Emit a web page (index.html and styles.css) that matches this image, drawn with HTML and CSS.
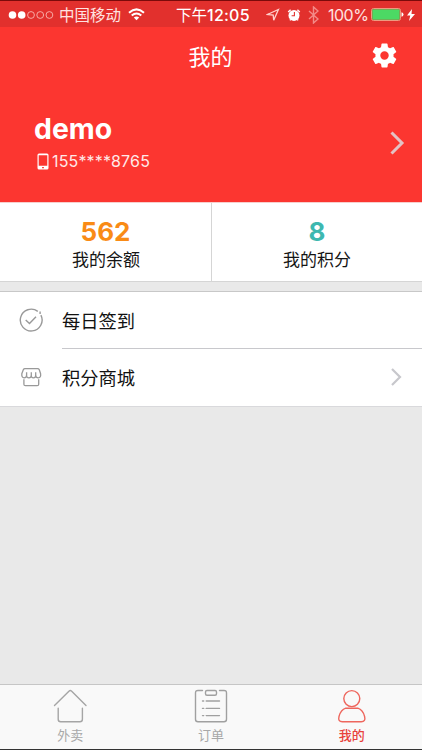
FILE: index.html
```html
<!DOCTYPE html>
<html lang="zh-CN">
<head>
<meta charset="utf-8">
<title>我的</title>
<link rel="stylesheet" href="styles.css">
</head>
<body>
<div class="app">
  <div class="status">
    <svg class="dots" width="48" height="10" viewBox="0 0 48 10" fill="none" stroke="#f9b5b1" stroke-width=".9">
      <circle cx="4.5" cy="5" r="3.8" fill="#fff" stroke="none"/><circle cx="13.7" cy="5" r="3.8" fill="#fff" stroke="none"/>
      <circle cx="23" cy="5" r="3.4"/><circle cx="32.2" cy="5" r="3.4"/><circle cx="41.4" cy="5" r="3.4"/>
    </svg>
    <span class="carrier">中国移动</span>
    <svg class="wifi" width="17" height="13" viewBox="0 0 17 13" fill="none" stroke="#fff" stroke-width="2">
      <path d="M1 4.7Q8.5-1.9 16 4.7M3.7 7.6Q8.5 3.3 13.3 7.6"/><path d="M5.8 9.5Q8.5 7.3 11.2 9.5L8.5 12.3Z" fill="#fff" stroke="none"/>
    </svg>
    <span class="time">下午<span class="digits">12:05</span></span>
    <svg class="location" width="14" height="14" viewBox="0 0 14 14" fill="none" stroke="#ffd0cd" stroke-width="1.3"><path d="M1.4 6.5 12.4 1.5 7.7 12.3 7.2 7Z"/></svg>
    <svg class="alarm" width="14" height="14" viewBox="0 0 14 14">
      <circle cx="7" cy="7.4" r="5.5" fill="#fff"/><path d="M1.2 3.9 3.6 1.7M10.4 1.7l2.4 2.2M3.6 11.4l-.6.9M10.4 11.4l.6.9" stroke="#fff" stroke-width="1.4"/><path d="M7.4 4v3.8H4.6" fill="none" stroke="#e2302d" stroke-width="1.1"/>
    </svg>
    <svg class="bluetooth" width="11" height="18" viewBox="0 0 11 18" fill="none" stroke="#f38b88" stroke-width="1.4"><path d="M1 5l9 8-4.5 4V1L10 5l-9 8"/></svg>
    <span class="percent">100%</span>
    <svg class="battery" width="33" height="13" viewBox="0 0 33 13"><rect x=".5" y=".5" width="29" height="12" rx="2" fill="none" stroke="#ed9b80"/><rect x="1.3" y="1.3" width="27.4" height="10.4" rx="1" fill="#4cd964"/><path d="M30.5 4.2q2 .3 2 2.3t-2 2.3Z" fill="#fff"/></svg>
    <svg class="bolt" width="8" height="12" viewBox="0 0 8 12" fill="#fff"><path d="M5 0 0 6.5h3.3L2 12l6-7H4.5Z"/></svg>
  </div>
  <header class="navbar">
    <h1 class="title">我的</h1>
    <svg class="gear" width="29" height="29" viewBox="0 0 24 24" fill="#fff"><path d="M19.43 12.98c.04-.32.07-.64.07-.98s-.03-.66-.07-.98l2.11-1.65c.19-.15.24-.42.12-.64l-2-3.46c-.12-.22-.39-.3-.61-.22l-2.49 1c-.52-.4-1.08-.73-1.69-.98l-.38-2.65C14.46 2.18 14.25 2 14 2h-4c-.25 0-.46.18-.49.42l-.38 2.65c-.61.25-1.17.59-1.69.98l-2.49-1c-.23-.09-.49 0-.61.22l-2 3.46c-.13.22-.07.49.12.64l2.11 1.65c-.04.32-.07.65-.07.98s.03.66.07.98l-2.11 1.65c-.19.15-.24.42-.12.64l2 3.46c.12.22.39.3.61.22l2.49-1c.52.4 1.08.73 1.69.98l.38 2.65c.03.24.24.42.49.42h4c.25 0 .46-.18.49-.42l.38-2.65c.61-.25 1.17-.59 1.69-.98l2.49 1c.23.09.49 0 .61-.22l2-3.46c.12-.22.07-.49-.12-.64zM12 15.5a3.5 3.5 0 1 1 0-7 3.5 3.5 0 0 1 0 7z"/></svg>
  </header>
  <section class="profile">
    <div class="who">
      <div class="name">demo</div>
      <div class="phone">
        <svg width="12" height="17" viewBox="0 0 12 17"><path fill="#fff" fill-rule="evenodd" d="M2 .5h8A1.5 1.5 0 0 1 11.5 2v13a1.5 1.5 0 0 1-1.5 1.5H2A1.5 1.5 0 0 1 .5 15V2A1.5 1.5 0 0 1 2 .5ZM1.7 2.2v10.6h8.6V2.2ZM5.1 14.1v1.2h1.8v-1.2Z"/></svg>
        <span>155****8765</span>
      </div>
    </div>
    <svg class="more" width="15" height="24" viewBox="0 0 15 24" fill="none" stroke="#e3c2c4" stroke-width="3"><path d="M1.5 1.5 12 12 1.5 22.5"/></svg>
  </section>
  <section class="stats">
    <div class="stat"><b class="value orange">562</b><span class="label">我的余额</span></div>
    <div class="stat"><b class="value teal">8</b><span class="label">我的积分</span></div>
  </section>
  <section class="list">
    <div class="row">
      <svg class="row-icon" width="24" height="24" viewBox="0 0 24 24" fill="none" stroke="#999" stroke-width="1.4"><path d="M21.9 7.1A10.9 10.9 0 1 1 18.8 3.4M21.1 3.6v2.3M6.7 12l3.8 3.5 6.5-6.8"/></svg>
      <div class="row-body divided"><span>每日签到</span></div>
    </div>
    <div class="row">
      <svg class="row-icon" width="24" height="24" viewBox="0 0 24 24" fill="none" stroke="#999" stroke-width="1.3" stroke-linejoin="round"><path d="M6 3.6h12.6q1.2 0 1.7 1.1l1.3 4.1q.5 4-2.3 4-2.5 0-2.6-2.6 0 2.6-2.3 2.6T12.3 10.2q0 2.6-2.4 2.6T7.6 10.2q-.1 2.6-2.5 2.6-2.6 0-2.3-4l1.5-4.1q.5-1.1 1.7-1.1ZM7.6 10.2V7.3M12.3 10.2V7.3M16.7 10.2V7.3M4.9 14.2v5q0 1.5 1.5 1.5h11.8q1.5 0 1.5-1.5v-5"/></svg>
      <div class="row-body"><span>积分商城</span>
        <svg class="chevron" width="11" height="18" viewBox="0 0 11 18" fill="none" stroke="#c7c7cc" stroke-width="2.2"><path d="m1 1 8 8-8 8"/></svg>
      </div>
    </div>
  </section>
  <main class="blank"></main>
  <nav class="tabs">
    <div class="tab">
      <svg width="36" height="36" viewBox="0 0 36 36" fill="none" stroke="#a5a5a5" stroke-width="1.4" stroke-linecap="round"><path d="M2.5 17.6 16.9 3.2q1.4-1.2 2.8 0L34 17.6M6.2 20.2v11.1q0 2.5 2.5 2.5h19.2q2.5 0 2.5-2.5V20.2"/></svg>
      <span>外卖</span>
    </div>
    <div class="tab">
      <svg width="36" height="36" viewBox="0 0 36 36" fill="none" stroke="#a0a0a0" stroke-width="1.4" stroke-linecap="round"><path d="M9.5 2.5H5Q2.5 2.5 2.5 5v26.2q0 2.5 2.5 2.5h26q2.5 0 2.5-2.5V5q0-2.5-2.5-2.5h-4.5M9.5 13h1.2M9.5 20.4h1.2M9.5 27.6h1.2M13.2 13H26.5M13.2 20.4H26.5M13.2 27.6H26.5"/><rect x="12.5" y="2.5" width="11" height="4.8" rx="1.5"/></svg>
      <span>订单</span>
    </div>
    <div class="tab active">
      <svg width="36" height="36" viewBox="0 0 36 36" fill="none" stroke="#ee665d" stroke-width="1.4"><circle cx="17.8" cy="10.6" r="8"/><path d="M11.8 20.2h12q5 1.5 6.8 8.3 1.3 5.3-3.3 5.3h-19q-4.6 0-3.3-5.3 1.8-6.8 6.8-8.3Z" stroke-linejoin="round"/></svg>
      <span>我的</span>
    </div>
  </nav>
</div>
</body>
</html>
```
FILE: styles.css
```css
* { box-sizing: border-box; }
body { margin: 0; font-family: Inter, "Noto Sans CJK SC", sans-serif; }
svg { display: block; flex: none; }
.app { width: 422px; height: 750px; display: flex; flex-direction: column; overflow: hidden; background: #e9e9e9; border-bottom: 1px solid #333; }

.status { height: 27px; flex: none; display: flex; align-items: center; padding: 1px 7px 0 8px; background: #e2302d; border-top: 1px solid #7b0a0a; color: #fff; white-space: nowrap; line-height: 24px; }
.carrier { width: 69px; padding: 2px 0 0 3px; font-size: 15.5px; color: #ffe3e1; }
.wifi { margin-left: 3px; }
.time { width: 90px; margin-left: 31px; padding-top: 2px; font-size: 15.5px; font-weight: 400; }
.digits { font-size: 16px; font-weight: 500; letter-spacing: .25px; }
.alarm { margin-left: 7px; }
.bluetooth { margin-left: 7px; }
.percent { width: 43px; margin-left: 9px; padding-top: 1px; font-size: 16px; letter-spacing: -.5px; color: #ffe3e1; }
.bolt { margin-left: 3px; }

.navbar { height: 58px; flex: none; display: grid; grid-template-columns: 1fr auto 1fr; align-items: center; padding: 0 23px 1px 0; background: #fc3630; color: #fff; }
.title { grid-column: 2; margin: 0; padding: 2px 0 0 22px; font-size: 22px; font-weight: 400; line-height: 30px; }
.gear { justify-self: end; }
.profile { height: 117px; flex: none; display: flex; justify-content: space-between; align-items: flex-start; padding: 27px 17px 0 34px; background: #fc3630; color: #fff; }
.name { font-size: 28.4px; font-weight: 700; line-height: 34px; }
.phone { display: flex; align-items: center; gap: 3px; height: 20px; margin-top: 5px; padding-left: 3px; font-size: 16px; letter-spacing: .15px; color: #ffe9e8; }
.more { margin-top: 19px; }

.stats { height: 80px; flex: none; display: grid; grid-template-columns: 212px 210px; background: #fff; border-top: 1px solid #f7cfcd; border-bottom: 1px solid #d5d5d5; }
.stat { display: flex; flex-direction: column; align-items: center; padding-top: 12px; }
.stat:first-child { border-right: 1px solid #d5d5d5; }
.value { font-size: 26px; line-height: 33px; }
.orange { color: #f98b16; }
.teal { color: #3eb8b0; }
.label { font-size: 17px; line-height: 25px; color: #151515; }
.stat:first-child .label { padding-left: 1px; }

.list { height: 116px; flex: none; margin-top: 9px; background: #fff; border-top: 1px solid #c8c8c8; border-bottom: 1px solid #d9d9dc; }
.row { display: flex; align-items: center; height: 57px; padding-left: 19px; }
.row-icon { margin-bottom: 1px; }
.row-body { flex: 1; height: 100%; margin-left: 19px; padding: 0 20px 1px 0; display: flex; align-items: center; justify-content: space-between; font-size: 18.3px; color: #111; }
.divided { border-bottom: 1px solid #c8c8cc; }

.blank { flex: 1; }
.tabs { height: 65px; flex: none; display: grid; grid-template-columns: repeat(3, 1fr); background: #f9f9f9; border-top: 1px solid #c6c6c6; }
.tab { display: flex; flex-direction: column; align-items: center; padding-top: 3px; font-size: 13px; line-height: 20px; color: #a8a8a8; }
.tab span { margin-top: 1px; }
.tab.active { color: #e8413c; }
.tab.active span { font-weight: 500; }
```
